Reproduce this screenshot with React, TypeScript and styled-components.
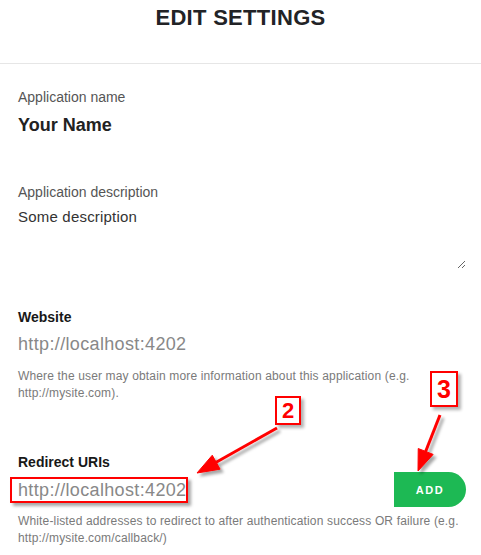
import React from "react";
import styled, { createGlobalStyle } from "styled-components";

const GlobalStyle = createGlobalStyle`
  html, body { margin: 0; padding: 0; background: #ffffff; }
  body { font-family: "Liberation Sans", Arial, sans-serif; }
  * { box-sizing: border-box; }
`;

const Page = styled.div`
  position: relative;
  width: 481px;
  min-height: 555px;
  overflow: hidden;
  background: #ffffff;
`;

const Header = styled.header`
  height: 64px;
  padding-top: 5px;
  border-bottom: 1px solid #e6e6e6;
`;

const Title = styled.h1`
  margin: 0;
  font-size: 22px;
  line-height: 26px;
  font-weight: 700;
  letter-spacing: 0.3px;
  color: #222326;
  text-align: center;
`;

const Form = styled.form`
  display: flex;
  flex-direction: column;
  padding: 23px 15px 0 18px;
`;

const Label = styled.label<{ $bold?: boolean; $gap?: number }>`
  display: block;
  margin-top: ${(p) => p.$gap ?? 0}px;
  font-size: 14px;
  line-height: 20px;
  font-weight: ${(p) => (p.$bold ? 700 : 400)};
  color: ${(p) => (p.$bold ? "#181818" : "#555555")};
`;

const NameValue = styled.div`
  margin-top: 6px;
  font-size: 18px;
  line-height: 24px;
  font-weight: 700;
  color: #222222;
`;

const Description = styled.textarea`
  display: block;
  width: 100%;
  height: 66px;
  margin-top: 1px;
  padding: 4px 0 0 0;
  border: none;
  outline: none;
  resize: vertical;
  font-family: "Liberation Sans", Arial, sans-serif;
  font-size: 15px;
  line-height: 20px;
  letter-spacing: 0.2px;
  color: #333333;
  background: transparent;
`;

const UrlValue = styled.div<{ $gap?: number }>`
  margin-top: ${(p) => p.$gap ?? 0}px;
  font-size: 18px;
  line-height: 26px;
  letter-spacing: 0.35px;
  color: #888888;
`;

const Help = styled.p<{ $gap: number }>`
  margin: ${(p) => p.$gap}px 0 0 0;
  font-size: 12px;
  line-height: 17px;
  letter-spacing: 0.15px;
  color: #7a7a7a;
`;

const UriRow = styled.div`
  position: relative;
  display: flex;
  align-items: center;
  height: 35px;
`;

const UriInput = styled.div`
  flex: 1;
  display: flex;
  align-items: center;
  font-size: 18px;
  line-height: 26px;
  letter-spacing: 0.35px;
  color: #888888;
`;

const Caret = styled.span`
  display: inline-block;
  width: 1px;
  height: 20px;
  margin-left: 1px;
  background: #333333;
`;

const AddButton = styled.button`
  width: 72px;
  height: 35px;
  border: none;
  border-radius: 0 18px 18px 0;
  background: #1db954;
  color: #ffffff;
  font-family: "Liberation Sans", Arial, sans-serif;
  font-size: 11px;
  font-weight: 700;
  letter-spacing: 1.6px;
  padding: 0;
`;

const HighlightBox = styled.div`
  position: absolute;
  left: -8px;
  top: 5px;
  width: 178px;
  height: 26px;
  border: 2px solid #ff0000;
  box-shadow: 3px 3px 3px rgba(0, 0, 0, 0.35);
  pointer-events: none;
`;

const StepBadge = styled.div<{ $x: number; $y: number; $w: number; $h: number; $size: number }>`
  position: absolute;
  left: ${(p) => p.$x}px;
  top: ${(p) => p.$y}px;
  width: ${(p) => p.$w}px;
  height: ${(p) => p.$h}px;
  border: 2px solid #ff0000;
  background: #ffffff;
  box-shadow: 3px 3px 3px rgba(0, 0, 0, 0.3);
  display: flex;
  align-items: center;
  justify-content: center;
  font-size: ${(p) => p.$size}px;
  font-weight: 700;
  color: #ff0000;
  line-height: 1;
`;

const ArrowLayer = styled.svg`
  position: absolute;
  left: 0;
  top: 0;
  pointer-events: none;
`;

const arrow = (sx: number, sy: number, tx: number, ty: number, len: number, half: number) => {
  const dx = tx - sx;
  const dy = ty - sy;
  const l = Math.hypot(dx, dy);
  const ux = dx / l;
  const uy = dy / l;
  const bx = tx - len * ux;
  const by = ty - len * uy;
  const nx = -uy;
  const ny = ux;
  return {
    line: { x1: sx, y1: sy, x2: bx + ux * 2, y2: by + uy * 2 },
    head: `${tx},${ty} ${bx + half * nx},${by + half * ny} ${bx - half * nx},${by - half * ny}`,
  };
};

export default function App() {
  const a2 = arrow(277, 428, 197, 473, 22, 8);
  const a3 = arrow(440, 415, 418, 471, 21, 8);
  return (
    <Page>
      <GlobalStyle />
      <Header>
        <Title>EDIT SETTINGS</Title>
      </Header>
      <Form onSubmit={(e) => e.preventDefault()}>
        <Label>Application name</Label>
        <NameValue>Your Name</NameValue>

        <Label $gap={45}>Application description</Label>
        <Description defaultValue="Some description" />

        <Label $bold $gap={38}>Website</Label>
        <UrlValue $gap={4}>http://localhost:4202</UrlValue>
        <Help $gap={11}>
          Where the user may obtain more information about this application (e.g. http://mysite.com).
        </Help>

        <Label $bold $gap={50}>Redirect URIs</Label>
        <UriRow>
          <UriInput>
            http://localhost:4202
            <Caret />
          </UriInput>
          <AddButton type="button">ADD</AddButton>
          <HighlightBox />
        </UriRow>
        <Help $gap={6}>
          White-listed addresses to redirect to after authentication success OR failure (e.g. http://mysite.com/callback/)
        </Help>
      </Form>

      <StepBadge $x={275} $y={396} $w={26} $h={29} $size={22}>2</StepBadge>
      <StepBadge $x={430} $y={371} $w={28} $h={36} $size={25}>3</StepBadge>

      <ArrowLayer width={481} height={555} viewBox="0 0 481 555">
        <defs>
          <filter id="arrowShadow" x="-20%" y="-20%" width="140%" height="140%">
            <feDropShadow dx="3" dy="3" stdDeviation="1.6" floodColor="#000000" floodOpacity="0.35" />
          </filter>
        </defs>
        <g filter="url(#arrowShadow)" fill="#ff0000" stroke="#ff0000">
          <line {...a2.line} strokeWidth={3} />
          <polygon points={a2.head} strokeWidth={1} strokeLinejoin="miter" />
          <line {...a3.line} strokeWidth={3} />
          <polygon points={a3.head} strokeWidth={1} strokeLinejoin="miter" />
        </g>
      </ArrowLayer>
    </Page>
  );
}
